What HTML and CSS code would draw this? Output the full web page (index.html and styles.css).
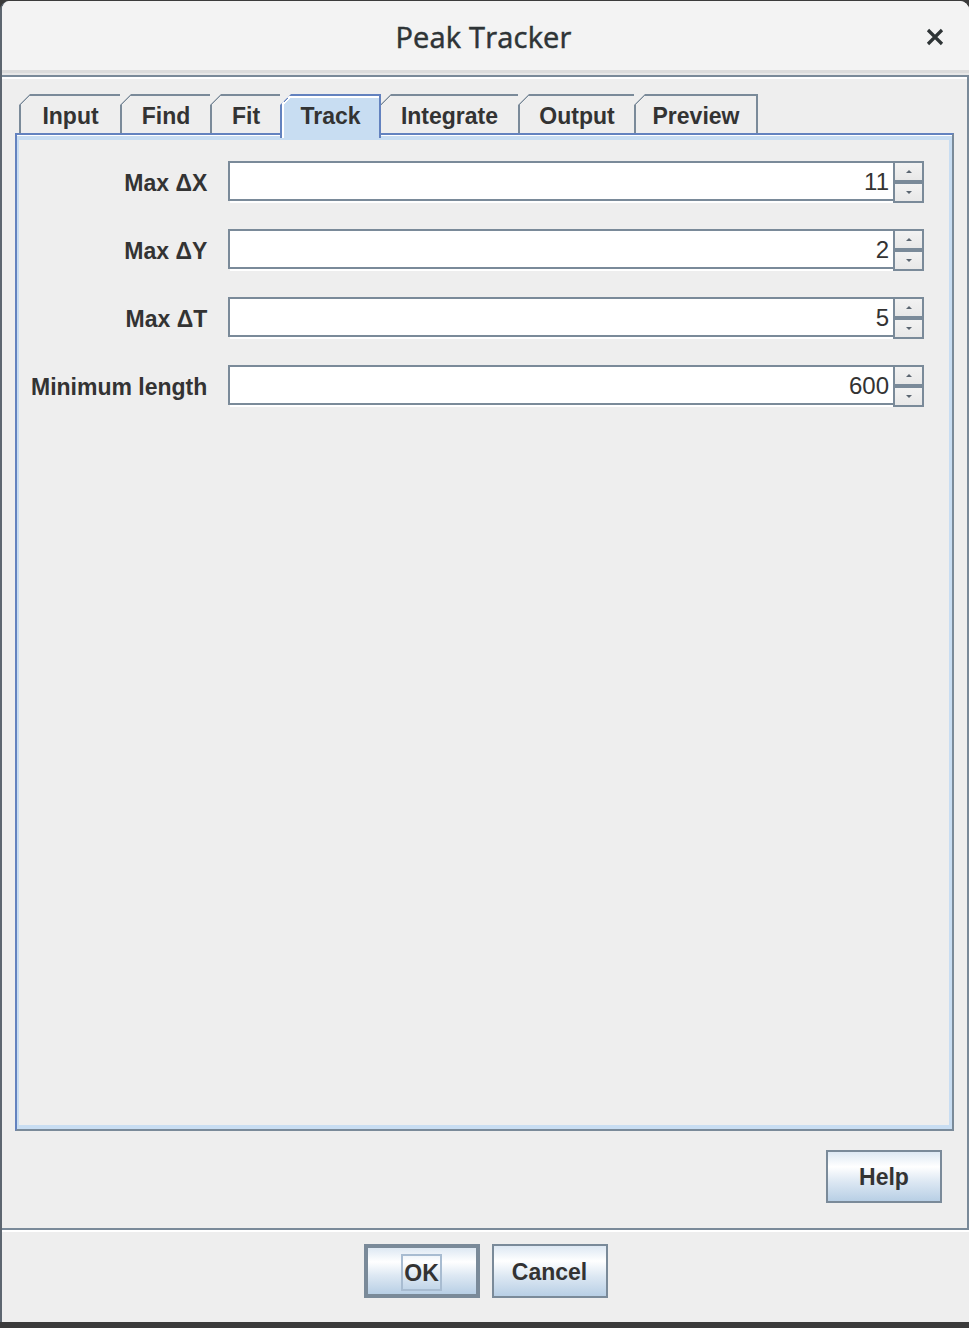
FILE: index.html
```html
<!DOCTYPE html>
<html>
<head>
<meta charset="utf-8">
<title>Peak Tracker</title>
<link rel="stylesheet" href="styles.css">
</head>
<body>
<div class="window">
  <div class="titlebar">
    <span></span>
    <span class="title">Peak Tracker</span>
    <span class="close">
      <svg width="18" height="18" viewBox="0 0 18 18"><path d="M2 2 L16 16 M16 2 L2 16" stroke="#2e3436" stroke-width="3.2" fill="none"/></svg>
    </span>
  </div>
  <div class="main">
    <div class="tabbed">
      <div class="tabstrip">
        <div class="tab w-input">Input</div>
        <div class="tab w-find">Find</div>
        <div class="tab w-fit">Fit</div>
        <div class="tab selected w-track">Track</div>
        <div class="tab w-integrate">Integrate</div>
        <div class="tab w-output">Output</div>
        <div class="tab last w-preview">Preview</div>
      </div>
      <div class="panel">
        <div class="panel-inner">
          <div class="form">
            <div class="label">Max ΔX</div>
            <div class="spinner">
              <div class="field">11</div>
              <div class="arrows"><div class="arrow"><span class="up"></span></div><div class="arrow"><span class="down"></span></div></div>
            </div>
            <div class="label">Max ΔY</div>
            <div class="spinner">
              <div class="field">2</div>
              <div class="arrows"><div class="arrow"><span class="up"></span></div><div class="arrow"><span class="down"></span></div></div>
            </div>
            <div class="label">Max ΔT</div>
            <div class="spinner">
              <div class="field">5</div>
              <div class="arrows"><div class="arrow"><span class="up"></span></div><div class="arrow"><span class="down"></span></div></div>
            </div>
            <div class="label">Minimum length</div>
            <div class="spinner">
              <div class="field">600</div>
              <div class="arrows"><div class="arrow"><span class="up"></span></div><div class="arrow"><span class="down"></span></div></div>
            </div>
          </div>
        </div>
      </div>
    </div>
    <div class="helprow"><div class="btn">Help</div></div>
  </div>
  <div class="okrow">
    <div class="btn default"><span class="focus">OK</span></div>
    <div class="btn">Cancel</div>
  </div>
</div>
</body>
</html>
```

FILE: styles.css
```css
html, body {
  margin: 0;
  padding: 0;
}
body {
  width: 969px;
  height: 1328px;
  overflow: hidden;
  background: #3b3b3b;
  font-family: "Liberation Sans", Arial, sans-serif;
  color: #333333;
}
.window {
  margin-top: 1px;
  height: 1321px;
  background: #eeeeee;
  border-radius: 9px 9px 0 0;
  overflow: hidden;
  display: flex;
  flex-direction: column;
  border-left: 2px solid #5d6670;
  box-sizing: border-box;
}
.titlebar {
  height: 69px;
  flex: none;
  background: #f3f3f3;
  display: grid;
  grid-template-columns: 1fr auto 1fr;
  align-items: center;
  border-bottom: 3px solid #dcdcdc;
  box-shadow: 0 2px 0 #e8e8e8;
}
.title {
  font-family: "Open Sans", "Noto Sans", sans-serif;
  font-size: 29px;
  color: #2e3436;
  -webkit-text-stroke: 0.5px #2e3436;
  letter-spacing: 0.2px;
  padding-top: 2px;
  margin-left: -4px;
}
.close {
  justify-self: end;
  margin-right: 25px;
  display: flex;
  padding-top: 3px;
}
.main {
  margin-top: 2px;
  border-top: 2px solid #7a8a99;
  border-right: 2px solid #7a8a99;
  border-bottom: 2px solid #7a8a99;
  box-shadow: inset 0 2px 0 #ffffff, 0 2px 0 #ffffff;
  display: flex;
  flex-direction: column;
  padding: 17px 13px 25px 13px;
}
.tabbed {
  display: flex;
  flex-direction: column;
}
.tabstrip {
  display: flex;
  align-items: flex-end;
  margin-left: 4px;
  height: 39px;
  position: relative;
  z-index: 1;
}
.tab {
  box-sizing: border-box;
  height: 39px;
  border-top: 2px solid #7a8a99;
  border-left: 2px solid #7a8a99;
  display: flex;
  align-items: center;
  justify-content: center;
  font-weight: bold;
  font-size: 23px;
  color: #333333;
  padding-top: 3px;
  background-origin: border-box;
  background-image: linear-gradient(135deg, #eeeeee 0, #eeeeee 7.3px, #7a8a99 7.3px, #7a8a99 8.7px, #eeeeee 8.7px);
  clip-path: polygon(11px 0, 100% 0, 100% 100%, 0 100%, 0 11px);
}
.tab.last {
  border-right: 2px solid #7a8a99;
}
.tab.selected {
  height: 44px;
  margin-bottom: -5px;
  padding-bottom: 5px;
  border-color: #6382bf;
  border-right: 2px solid #6382bf;
  background-image: linear-gradient(135deg, #eeeeee 0, #eeeeee 7.3px, #6382bf 7.3px, #6382bf 8.7px, #ffffff 8.7px, #ffffff 10px, #c8ddf2 10px);
  box-shadow: inset 2px 2px 0 #ffffff;
}
.tab.selected + .tab {
  border-left: none;
  background-image: linear-gradient(135deg, #eeeeee 0, #eeeeee 6.5px, #7a8a99 6.5px, #7a8a99 7.9px, #eeeeee 7.9px);
  clip-path: polygon(10px 0, 100% 0, 100% 100%, 0 100%, 0 10px);
}
.w-input { width: 101px; }
.w-find { width: 90px; }
.w-fit { width: 70px; }
.w-track { width: 101px; }
.w-integrate { width: 137px; }
.w-output { width: 116px; }
.w-preview { width: 124px; }
.panel {
  height: 998px;
  box-sizing: border-box;
  border-top: 2px solid #6382bf;
  border-left: 2px solid #6382bf;
  border-right: 2px solid #7a8a99;
  border-bottom: 2px solid #7a8a99;
  background: #c8ddf2;
  padding: 5px 3px 4px 2px;
  box-shadow: inset 0 1px 0 #ffffff;
}
.panel-inner {
  height: 100%;
  background: #eeeeee;
  box-sizing: border-box;
  padding: 21px 25px 0 12px;
}
.form {
  display: grid;
  grid-template-columns: auto 1fr;
  column-gap: 21px;
  row-gap: 26px;
  align-items: center;
}
.label {
  text-align: right;
  font-weight: bold;
  font-size: 23px;
  color: #333333;
  padding-top: 2px;
}
.spinner {
  display: flex;
  height: 42px;
}
.field {
  flex: 1;
  height: 40px;
  box-sizing: border-box;
  border: 2px solid #7a8a99;
  background: #ffffff;
  box-shadow: 2px 2px 0 #ffffff;
  font-size: 24px;
  color: #333333;
  text-align: right;
  padding-right: 4px;
  line-height: 37px;
}
.arrows {
  width: 31px;
  margin-left: -2px;
  display: flex;
  flex-direction: column;
  position: relative;
}
.arrow {
  height: 21px;
  box-sizing: border-box;
  border: 2px solid #7a8a99;
  background: linear-gradient(#f2f2f2, #e8e8e8);
  display: flex;
  align-items: center;
  justify-content: center;
}
.up {
  width: 0;
  height: 0;
  border-left: 3px solid transparent;
  border-right: 3px solid transparent;
  border-bottom: 3px solid #5a6570;
}
.down {
  width: 0;
  height: 0;
  border-left: 3px solid transparent;
  border-right: 3px solid transparent;
  border-top: 3px solid #5a6570;
}
.helprow {
  display: flex;
  justify-content: flex-end;
  padding: 19px 12px 0 0;
}
.btn {
  width: 116px;
  height: 53px;
  box-sizing: border-box;
  border: 2px solid #7a8a99;
  background: linear-gradient(#dde8f3 0%, #ffffff 30%, #dde8f3 60%, #b8cfe5 100%);
  display: flex;
  align-items: center;
  justify-content: center;
  font-weight: bold;
  font-size: 23px;
  color: #333333;
  padding-top: 2px;
}
.okrow {
  display: flex;
  justify-content: center;
  gap: 12px;
  padding-top: 14px;
}
.okrow .btn {
  height: 54px;
}
.btn.default {
  border-width: 4px;
}
.focus {
  border: 2px solid #a8bcd1;
  padding: 3px 1px 2px 1px;
  line-height: 28px;
}
```
